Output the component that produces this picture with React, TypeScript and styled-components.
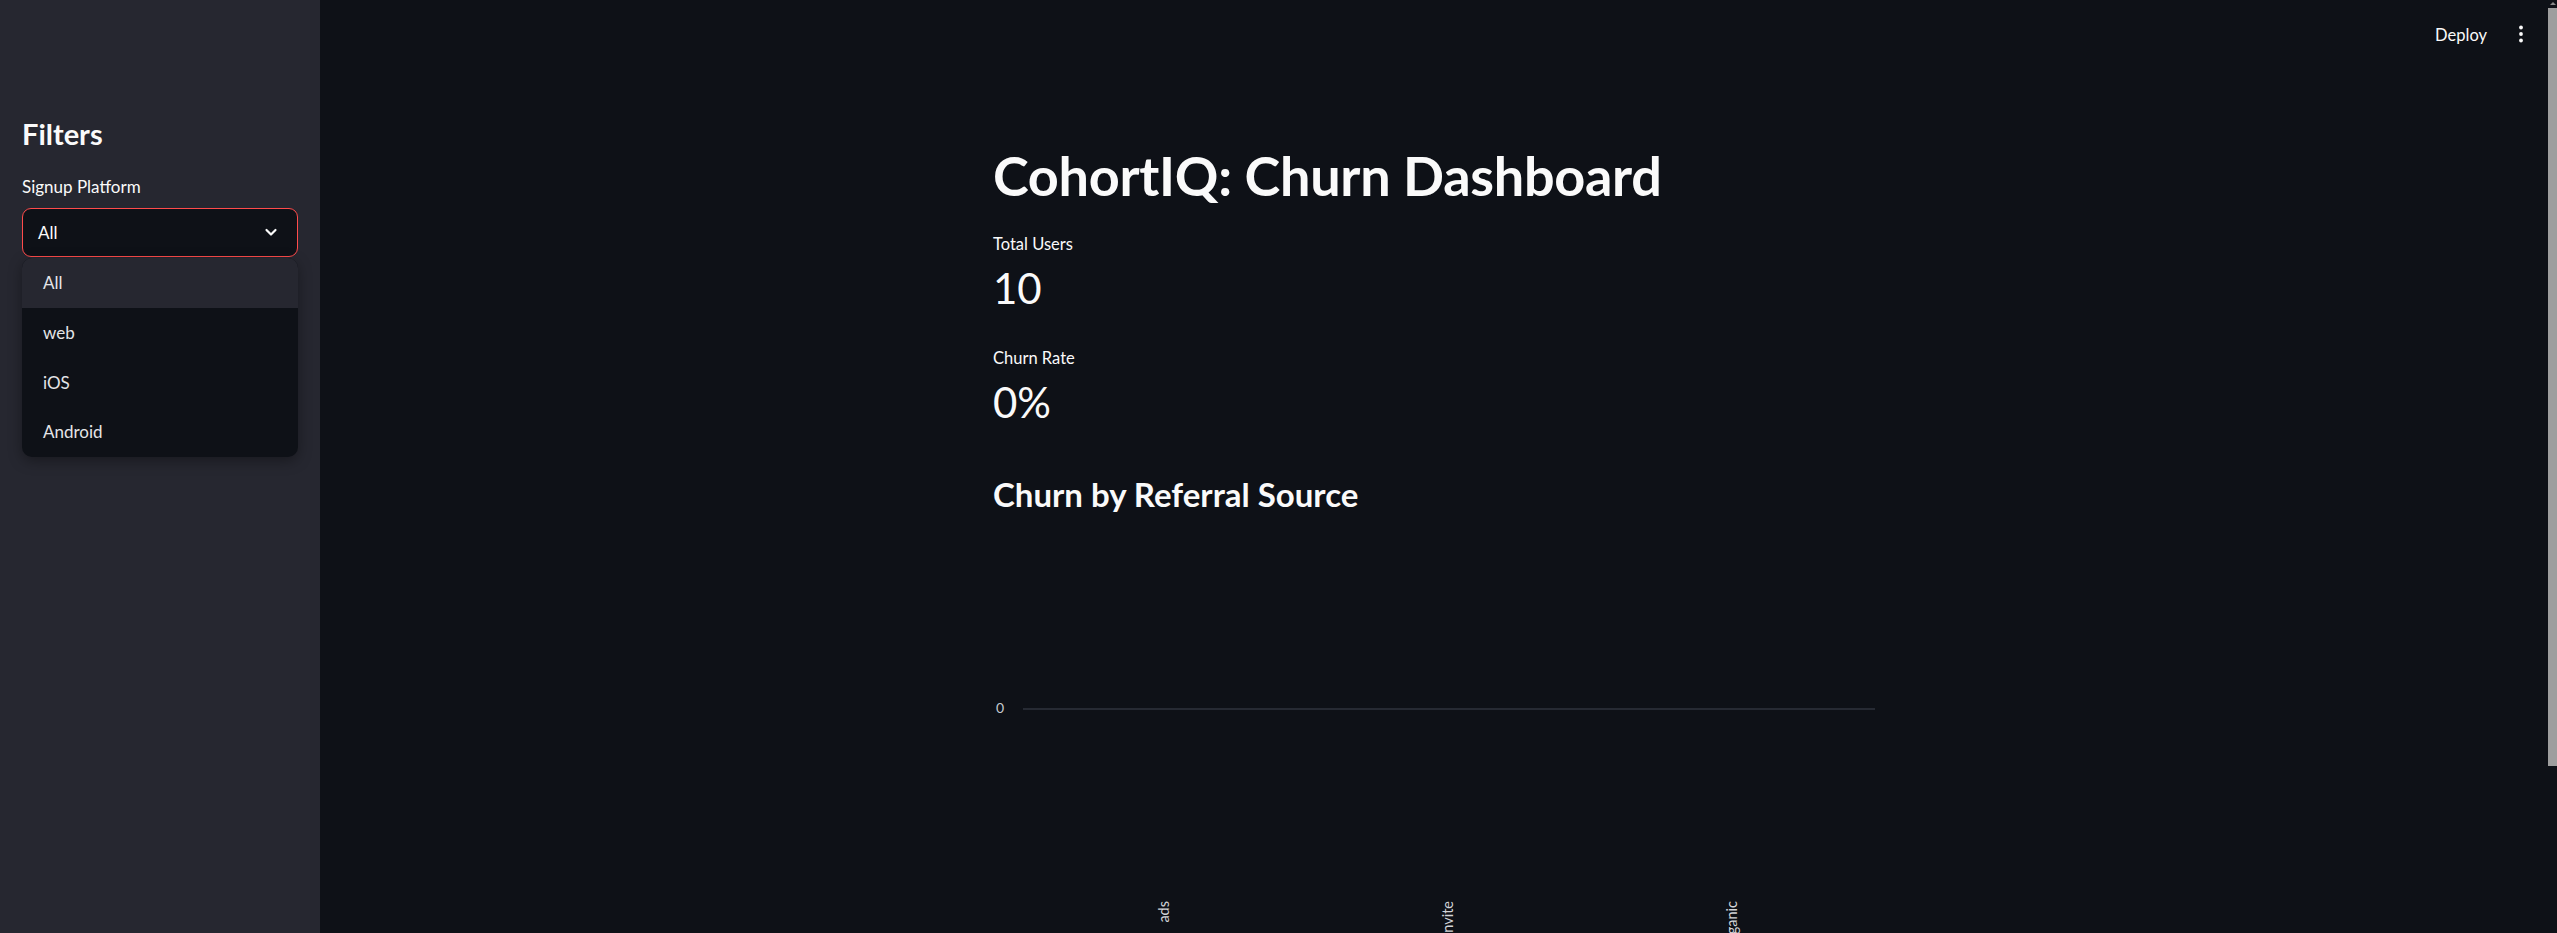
import React from 'react';
import styled, { createGlobalStyle } from 'styled-components';

const GlobalStyle = createGlobalStyle`
  html, body {
    margin: 0;
    padding: 0;
    background: #0e1117;
    overflow: hidden;
  }
  * { box-sizing: border-box; }
`;

const platforms = ['All', 'web', 'iOS', 'Android'];
const sources = ['ads', 'invite', 'organic'];

const Chevron = () => (
  <svg width="16" height="16" viewBox="0 0 16 16" fill="none">
    <path d="M3.5 6 L8 10.5 L12.5 6" stroke="#fafafa" strokeWidth="2.2" strokeLinecap="round" strokeLinejoin="round" />
  </svg>
);

const KebabIcon = () => (
  <svg width="6" height="20" viewBox="0 0 6 20">
    <circle cx="3" cy="3.5" r="1.9" fill="#fafafa" />
    <circle cx="3" cy="10" r="1.9" fill="#fafafa" />
    <circle cx="3" cy="16.5" r="1.9" fill="#fafafa" />
  </svg>
);

const ChurnChart: React.FC = () => {
  const left = 30;
  const right = 882;
  const band = (right - left) / sources.length;
  return (
    <ChartSvg width="882" height="420" viewBox="0 0 882 420">
      <text x="11" y="178" textAnchor="end" dominantBaseline="middle" fill="#c7cad0" fontSize="14" fontFamily="Lato, sans-serif">0</text>
      <line x1={left} y1="178" x2={right} y2="178" stroke="#262a33" strokeWidth="2" />
      {sources.map((s, i) => {
        const cx = left + band * i + band / 2;
        return (
          <text
            key={s}
            transform={`translate(${cx}, 370) rotate(-90)`}
            textAnchor="end"
            dominantBaseline="middle"
            fill="#d2d4d8"
            fontSize="14.5"
            fontFamily="Lato, sans-serif"
          >
            {s}
          </text>
        );
      })}
    </ChartSvg>
  );
};

export default function App() {
  return (
    <>
      <GlobalStyle />
      <Page>
        <Sidebar>
          <SideTitle>Filters</SideTitle>
          <FieldLabel>Signup Platform</FieldLabel>
          <SelectBox>
            <span>All</span>
            <Chevron />
          </SelectBox>
          <Menu>
            {platforms.map((p, i) => (
              <MenuItem key={p} active={i === 0}>{p}</MenuItem>
            ))}
          </Menu>
        </Sidebar>
        <Main>
          <Header>
            <DeployButton>Deploy</DeployButton>
            <MenuButton><KebabIcon /></MenuButton>
          </Header>
          <Content>
            <Title>CohortIQ: Churn Dashboard</Title>
            <MetricLabel>Total Users</MetricLabel>
            <MetricValue>10</MetricValue>
            <MetricLabel spaced>Churn Rate</MetricLabel>
            <MetricValue>0%</MetricValue>
            <SubHeader>Churn by Referral Source</SubHeader>
            <ChurnChart />
          </Content>
        </Main>
        <ScrollTrack>
          <ScrollArrow />
          <ScrollThumb />
        </ScrollTrack>
      </Page>
    </>
  );
}

const Page = styled.div`
  display: flex;
  width: 2557px;
  height: 933px;
  overflow: hidden;
  font-family: Lato, "Liberation Sans", sans-serif;
  color: #fafafa;
  background: #0e1117;
`;

const Sidebar = styled.aside`
  width: 320px;
  flex-shrink: 0;
  background: #262730;
  padding: 117px 22px 0 22px;
  display: flex;
  flex-direction: column;
`;

const SideTitle = styled.h2`
  margin: 0;
  font-size: 29px;
  line-height: 1.2;
  font-weight: 700;
`;

const FieldLabel = styled.label`
  margin-top: 25px;
  font-size: 17px;
  line-height: 20px;
  color: #fafafa;
`;

const SelectBox = styled.div`
  margin-top: 11px;
  height: 49px;
  flex-shrink: 0;
  border: 1px solid #ff4b4b;
  border-radius: 9px;
  background: #0e1117;
  display: flex;
  align-items: center;
  justify-content: space-between;
  padding: 0 18px 0 15px;
  font-size: 17px;
`;

const Menu = styled.ul`
  list-style: none;
  margin: 1px 0 0 0;
  padding: 0;
  background: #0e1117;
  border-radius: 10px;
  overflow: hidden;
  box-shadow: 0 4px 14px rgba(0, 0, 0, 0.35);
`;

const MenuItem = styled.li<{ active?: boolean }>`
  height: 49.75px;
  display: flex;
  align-items: center;
  padding-left: 21px;
  font-size: 17px;
  color: #e4e5e8;
  background: ${p => (p.active ? '#262730' : 'transparent')};
`;

const Main = styled.main`
  flex: 1;
  display: flex;
  flex-direction: column;
  min-width: 0;
  overflow: hidden;
`;

const Header = styled.header`
  height: 70px;
  flex-shrink: 0;
  display: flex;
  align-items: center;
  justify-content: flex-end;
  padding-right: 11px;
  gap: 6px;
`;

const DeployButton = styled.button`
  background: transparent;
  border: none;
  color: #fafafa;
  font-family: Lato, sans-serif;
  font-size: 16.5px;
  padding: 0 12px;
  cursor: pointer;
`;

const MenuButton = styled.button`
  width: 32px;
  height: 32px;
  background: transparent;
  border: none;
  display: flex;
  align-items: center;
  justify-content: center;
  padding: 0;
  margin-top: -2px;
`;

const Content = styled.section`
  width: 882px;
  flex-shrink: 0;
  margin: 0 auto;
  padding-top: 75px;
  display: flex;
  flex-direction: column;
  & > * { flex-shrink: 0; }
`;

const Title = styled.h1`
  margin: 0;
  font-size: 54px;
  line-height: 62px;
  font-weight: 700;
  letter-spacing: -0.3px;
`;

const MetricLabel = styled.div<{ spaced?: boolean }>`
  margin-top: ${p => (p.spaced ? '35px' : '27px')};
  font-size: 16.5px;
  line-height: 20px;
`;

const MetricValue = styled.div`
  margin-top: 9px;
  font-size: 42px;
  line-height: 50px;
  font-weight: 400;
`;

const SubHeader = styled.h3`
  margin: 48px 0 0 0;
  font-size: 33px;
  line-height: 38px;
  font-weight: 700;
`;

const ChartSvg = styled.svg`
  display: block;
  margin-top: 18px;
  overflow: visible;
`;

const ScrollTrack = styled.div`
  width: 9px;
  flex-shrink: 0;
  background: #0e1117;
  display: flex;
  flex-direction: column;
  align-items: center;
`;

const ScrollArrow = styled.div`
  width: 0;
  height: 0;
  margin-top: 2px;
  border-left: 3px solid transparent;
  border-right: 3px solid transparent;
  border-bottom: 3px solid #8a8a8a;
`;

const ScrollThumb = styled.div`
  margin-top: 3px;
  width: 9px;
  height: 758px;
  background: #9e9e9e;
`;
